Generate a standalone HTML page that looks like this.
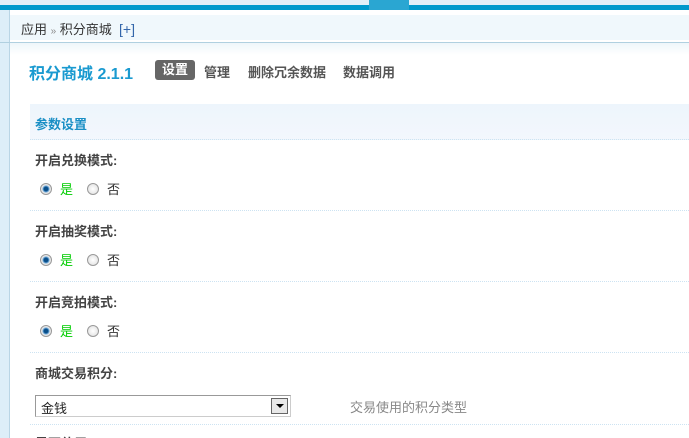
<html style="overflow:hidden;height:438px"><head><style>
body{margin:0;width:689px;height:438px;overflow:hidden;background:#fff;font-family:"Liberation Sans","Noto Sans CJK SC",sans-serif;font-size:13px;position:relative}
.a{position:absolute}
.lbl{position:absolute;left:35px;font-weight:bold;color:#444;font-size:13px}
.rad{position:absolute;left:40px;font-size:13px;color:#333}
.r{position:absolute;top:4px;width:10px;height:10px;border-radius:50%;border:1px solid #999;background:radial-gradient(#fff,#ddd)}
.r.on{background:radial-gradient(#0a4f8a 0 2px,#6aa6d8 3px,#e8e8e8 4px)}
.dot{position:absolute;left:30px;right:0;border-top:1px dotted #cde3f2}
</style></head><body>
<div class="a" style="left:0;top:0;width:689px;height:5px;background:#e2eff8"></div>
<div class="a" style="left:0;top:5px;width:689px;height:5px;background:#0099cc"></div>
<div class="a" style="left:369px;top:0;width:40px;height:10px;background:#2aa6d2"></div>
<div class="a" style="left:0;top:10px;width:9px;height:428px;background:#ddeef8"></div>
<div class="a" style="left:9px;top:10px;width:1px;height:428px;background:#b9d5e5"></div>
<div class="a" style="left:10px;top:15px;width:679px;height:25px;background:#f0f8fc"></div>
<div class="a" style="left:0;top:42px;width:689px;height:1px;background:#b0d0e0"></div>
<div class="a" style="left:10px;top:43px;width:679px;height:12px;background:linear-gradient(#eef6fa,#fff)"></div>
<div class="a" style="left:21px;top:19px;color:#333">应用 <span style="color:#888;font-size:10px">»</span> 积分商城 &nbsp;<span style="color:#3366aa;font-size:14px">[+]</span></div>
<div class="a" style="left:29px;top:60px;color:#1a9ad0;font-weight:bold;font-size:16px">积分商城 2.1.1</div>
<div class="a" style="left:155px;top:60px;width:40px;height:20px;background:#666;border-radius:3px;color:#fff;font-weight:bold;text-align:center;line-height:20px">设置</div>
<div class="a" style="left:204px;top:62px;color:#555;font-weight:bold">管理</div>
<div class="a" style="left:248px;top:62px;color:#555;font-weight:bold">删除冗余数据</div>
<div class="a" style="left:343px;top:62px;color:#555;font-weight:bold">数据调用</div>
<div class="a" style="left:30px;top:104px;width:659px;height:35px;background:linear-gradient(#edf5fc,#f3f7fd);border-bottom:1px dotted #cde3f2"></div>
<div class="a" style="left:35px;top:114px;color:#1a8fc5;font-weight:bold">参数设置</div>

<div class="lbl" style="top:150px">开启兑换模式:</div>
<div class="rad" style="top:179px"><span class="r on"></span><span class="a" style="left:20px;color:#0c0">是</span><span class="r" style="left:47px"></span><span class="a" style="left:67px">否</span></div>
<div class="dot" style="top:210px"></div>
<div class="lbl" style="top:221px">开启抽奖模式:</div>
<div class="rad" style="top:250px"><span class="r on"></span><span class="a" style="left:20px;color:#0c0">是</span><span class="r" style="left:47px"></span><span class="a" style="left:67px">否</span></div>
<div class="dot" style="top:281px"></div>
<div class="lbl" style="top:292px">开启竞拍模式:</div>
<div class="rad" style="top:321px"><span class="r on"></span><span class="a" style="left:20px;color:#0c0">是</span><span class="r" style="left:47px"></span><span class="a" style="left:67px">否</span></div>
<div class="dot" style="top:352px"></div>
<div class="lbl" style="top:363px">商城交易积分:</div>
<div class="a" style="left:35px;top:395px;width:254px;height:20px;border:1px solid #999;border-right-color:#ccc;border-bottom-color:#ccc;background:#fff"></div>
<div class="a" style="left:41px;top:398px;color:#222">金钱</div>
<div class="a" style="left:271px;top:398px;width:15px;height:14px;border:1px solid #666;background:#e8e8e8"><div style="margin:5px auto 0;width:0;height:0;border:4px solid transparent;border-top:4px solid #000;border-bottom:0"></div></div>
<div class="a" style="left:350px;top:397px;color:#888">交易使用的积分类型</div>
<div class="dot" style="top:424px"></div>
<div class="lbl" style="top:433px">是否使用</div>
</body></html>
